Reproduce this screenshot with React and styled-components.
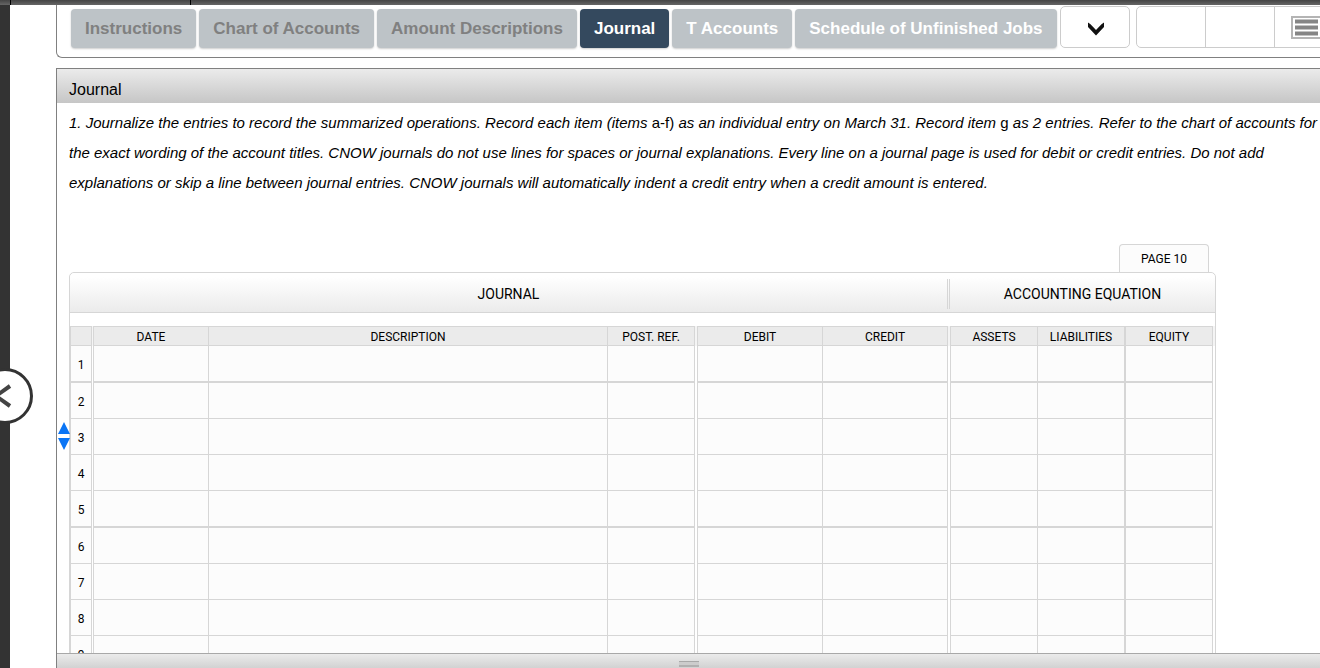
import React from 'react';
import styled, { createGlobalStyle } from 'styled-components';

const tabs = [
    { name: 'Instructions', dim: true },
    { name: 'Chart of Accounts', dim: true },
    { name: 'Amount Descriptions', dim: true },
    { name: 'Journal', active: true },
    { name: 'T Accounts' },
    { name: 'Schedule of Unfinished Jobs' },
];

// gap columns split the number, journal, amount and equation groups
const columns = [
    { key: 'line', width: 22, start: true },
    { key: 'gap1', width: 1, gap: true },
    { key: 'date', width: 116, start: true, label: 'DATE' },
    { key: 'description', label: 'DESCRIPTION' },
    { key: 'ref', width: 87, label: 'POST. REF.' },
    { key: 'gap2', width: 2, gap: true },
    { key: 'debit', width: 126, start: true, label: 'DEBIT' },
    { key: 'credit', width: 125, label: 'CREDIT' },
    { key: 'gap3', width: 2, gap: true },
    { key: 'assets', width: 88, start: true, label: 'ASSETS' },
    { key: 'liabilities', width: 88, thick: true, label: 'LIABILITIES' },
    { key: 'equity', width: 87, label: 'EQUITY' },
    { key: 'gap4', width: 2, gap: true },
];

const lines = [1, 2, 3, 4, 5, 6, 7, 8, 9];

export default class App extends React.Component {
    state = { page: 10 };

    renderTabs = () => {
        return tabs.map(tab => (
            <StyledTab key={tab.name} type="button" $active={tab.active} $dim={tab.dim}>
                {tab.name}
            </StyledTab>
        ))
    }

    renderToolbar = () => {
        return (
            <StyledToolbar>
                <StyledTabs>{this.renderTabs()}</StyledTabs>
                <StyledMore type="button" aria-label="More tabs">
                    <svg width="18" height="16" viewBox="0 0 18 16">
                        <path d="M1 1.5 L3.5 3.2 L9 9 L14.5 3.2 L17 1.5 V6 L9 14.5 L1 6 Z" fill="#111" />
                    </svg>
                </StyledMore>
                <StyledGroup>
                    <StyledGroupButton type="button" aria-label="Previous" />
                    <StyledGroupButton type="button" aria-label="Next" />
                    <StyledGroupButton type="button" aria-label="List">
                        <svg width="36" height="23" viewBox="0 0 36 23">
                            <rect x="1" y="1" width="30" height="21" fill="#fff" stroke="#b4b4b4" strokeWidth="2" />
                            <path d="M4 5.5 H27 M4 11.5 H27 M4 17.5 H27" stroke="#858585" strokeWidth="4" />
                        </svg>
                    </StyledGroupButton>
                </StyledGroup>
            </StyledToolbar>
        )
    }

    renderHead = () => {
        return columns.map(col => (
            col.gap
                ? <StyledGap key={col.key} $head />
                : <StyledTh key={col.key} scope="col" $start={col.start} $thick={col.thick}>{col.label}</StyledTh>
        ))
    }

    renderLines = () => {
        return lines.map(line => (
            <tr key={`line-${line}`}>
                {columns.map(col => (
                    col.gap
                        ? <StyledGap key={col.key} />
                        : <StyledTd key={col.key} $start={col.start} $thick={col.thick} $heavy={line % 4 === 1}>
                            {col.key === 'line' ? line : null}
                        </StyledTd>
                ))}
            </tr>
        ))
    }

    renderJournal = () => {
        return (
            <StyledBook>
                <StyledPageTab>PAGE {this.state.page}</StyledPageTab>
                <StyledSheet>
                    <StyledSheetHeader>
                        <StyledTitle>JOURNAL</StyledTitle>
                        <StyledTitle $narrow>ACCOUNTING EQUATION</StyledTitle>
                    </StyledSheetHeader>
                    <StyledTable>
                        <colgroup>
                            {columns.map(col => <col key={col.key} width={col.width} />)}
                        </colgroup>
                        <thead>
                            <tr>{this.renderHead()}</tr>
                        </thead>
                        <tbody>{this.renderLines()}</tbody>
                    </StyledTable>
                </StyledSheet>
                <StyledSorter>
                    <svg width="12" height="28" viewBox="0 0 12 28">
                        <path d="M6 0 L12 12 H0 Z M0 16 H12 L6 28 Z" fill="#0b75f5" />
                    </svg>
                </StyledSorter>
            </StyledBook>
        )
    }

    render() {
        return (
            <StyledPage>
                <GlobalStyle />
                <StyledStrip>
                    <StyledNotch $width={10} />
                    <StyledNotch $width={179} />
                </StyledStrip>
                <StyledRow>
                    <StyledSide>
                        <StyledBack type="button" aria-label="Back">
                            <svg width="24" height="24" viewBox="0 0 24 24">
                                <path d="M17 2 L3 12 L17 22" fill="none" stroke="#444" strokeWidth="4" />
                            </svg>
                        </StyledBack>
                    </StyledSide>
                    <StyledMain>
                        {this.renderToolbar()}
                        <StyledPanel>
                            <StyledPanelHeader>Journal</StyledPanelHeader>
                            <StyledBody>
                                <StyledText>
                                    1. Journalize the entries to record the summarized operations. Record each item (items <span>a-f)</span> as an
                                    individual entry on March 31. Record item <span>g</span> as 2 entries. Refer to the chart of accounts for
                                    the exact wording of the account titles. CNOW journals do not use lines for spaces or journal explanations.
                                    Every line on a journal page is used for debit or credit entries. Do not add explanations or skip a line
                                    between journal entries. CNOW journals will automatically indent a credit entry when a credit amount is entered.
                                </StyledText>
                                {this.renderJournal()}
                            </StyledBody>
                            <StyledFooter>
                                <StyledHandle />
                            </StyledFooter>
                        </StyledPanel>
                    </StyledMain>
                </StyledRow>
            </StyledPage>
        )
    }
}

const GlobalStyle = createGlobalStyle`
* {
  box-sizing: border-box;
}
body {
  margin: 0;
  background: #fff;
  color: #000;
  font-family: "Liberation Sans", Arial, sans-serif;
}
button {
  font-family: inherit;
  cursor: pointer;
}
`
const StyledPage = styled.div`
display: flex;
flex-direction: column;
height: 100vh;
overflow: hidden;
`
const StyledStrip = styled.div`
display: flex;
flex: none;
gap: 1px;
height: 5px;
background: linear-gradient(#444, #666);
`
const StyledNotch = styled.div`
width: ${props => props.$width}px;
box-shadow: 1px 0 0 #000;
`
const StyledRow = styled.div`
display: flex;
flex: 1;
min-height: 0;
`
const StyledSide = styled.div`
position: relative;
flex: none;
width: 10px;
background: #333;
`
const StyledBack = styled.button`
position: absolute;
top: 363px;
left: -23px;
display: flex;
align-items: center;
justify-content: center;
width: 56px;
height: 56px;
padding: 0;
border: 3px solid #333;
border-radius: 50%;
background: #fff;
`
const StyledMain = styled.div`
display: flex;
flex: 1;
flex-direction: column;
gap: 10px;
min-width: 0;
padding-left: 46px;
`
const StyledToolbar = styled.div`
display: flex;
flex: none;
align-items: flex-start;
height: 53px;
padding: 1px 0 0 14px;
border-bottom: 1px solid #808080;
border-left: 1px solid #808080;
border-bottom-left-radius: 6px;
overflow: hidden;
`
const StyledTabs = styled.div`
display: flex;
flex: none;
gap: 3px;
padding-top: 3px;
`
const StyledTab = styled.button`
height: 39px;
padding: 0 14px;
border: 0;
border-radius: 4px;
background: ${props => props.$active ? '#34495e' : '#bdc3c7'};
color: ${props => props.$dim ? '#808080' : '#fff'};
box-shadow: 0 1px 2px rgba(0, 0, 0, 0.2);
font-size: 17px;
font-weight: bold;
white-space: nowrap;
`
const StyledMore = styled.button`
display: flex;
flex: none;
align-items: center;
justify-content: center;
width: 70px;
height: 42px;
margin-left: 3px;
padding: 4px 0 0 2px;
border: 1px solid #ccc;
border-radius: 5px;
background: #fff;
`
const StyledGroup = styled.div`
display: flex;
flex: none;
height: 42px;
margin-left: 6px;
border: 1px solid #ccc;
border-radius: 5px;
`
const StyledGroupButton = styled.button`
display: flex;
align-items: center;
width: 69px;
padding: 0 0 0 16px;
border: 0;
border-right: 1px solid #ccc;
background: transparent;
`
const StyledPanel = styled.section`
display: flex;
flex: 1;
flex-direction: column;
min-height: 0;
border-top: 1px solid #808080;
border-left: 1px solid #808080;
`
const StyledPanelHeader = styled.header`
flex: none;
height: 34px;
padding: 4px 12px 0;
background: linear-gradient(#ebebeb, #c6c6c6);
font-size: 16px;
line-height: 34px;
`
const StyledBody = styled.div`
flex: 1;
min-height: 0;
padding: 5px 0 0 12px;
overflow: hidden;
`
const StyledText = styled.p`
margin: 0;
font-size: 15px;
font-style: italic;
line-height: 30px;

span {
  font-style: normal;
}
`
const StyledBook = styled.div`
position: relative;
display: flex;
flex-direction: column;
max-width: 1147px;
margin-top: 46px;
font-family: Roboto, "Noto Sans", sans-serif;
`
const StyledPageTab = styled.div`
align-self: flex-end;
width: 90px;
height: 28px;
margin-right: 7px;
border: 1px solid #d6d6d6;
border-bottom: 0;
border-radius: 4px 4px 0 0;
background: #fcfcfc;
font-size: 12px;
line-height: 28px;
text-align: center;
`
const StyledSheet = styled.div`
border: 1px solid #d6d6d6;
border-radius: 5px 5px 0 0;
`
const StyledSheetHeader = styled.div`
display: flex;
gap: 1px;
height: 40px;
margin-bottom: 13px;
padding: 6px 0 3px;
border-bottom: 1px solid #d6d6d6;
border-radius: 5px 5px 0 0;
background: linear-gradient(#fff 10%, #ebebeb);
`
const StyledTitle = styled.h2`
flex: ${props => props.$narrow ? '0 0 266px' : '1'};
margin: 0;
font-size: 14px;
font-weight: normal;
line-height: 30px;
text-align: center;

& + & {
  border-left: 1px solid #d6d6d6;
}
&:first-child {
  border-right: 1px solid #d6d6d6;
}
`
const StyledTable = styled.table`
width: 100%;
border-spacing: 0;
table-layout: fixed;
font-size: 12px;
text-align: center;
`
const StyledTh = styled.th`
height: 20px;
padding: 2px 0 0;
border: 0 solid #d6d6d6;
border-width: 1px ${props => props.$thick ? 2 : 1}px 1px ${props => props.$start ? 1 : 0}px;
background: #ebebeb;
font-weight: normal;
line-height: 16px;
`
const StyledTd = styled.td`
height: ${props => props.$heavy ? 37 : 36}px;
padding: 2px 0 0;
border: 0 solid #d6d6d6;
border-width: 0 ${props => props.$thick ? 2 : 1}px ${props => props.$heavy ? 2 : 1}px ${props => props.$start ? 1 : 0}px;
background: #fcfcfc;
`
const StyledGap = styled.td`
padding: 0;
background: ${props => props.$head ? '#f4f4f4' : '#fff'};
`
const StyledSorter = styled.div`
position: absolute;
top: 178px;
left: -11px;
line-height: 0;
`
const StyledFooter = styled.footer`
display: flex;
flex: none;
justify-content: center;
height: 15px;
padding-top: 7px;
border-top: 1px solid #a8a8a8;
background: linear-gradient(#ebebeb, #d2d2d2);
`
const StyledHandle = styled.div`
width: 20px;
height: 6px;
border-top: 1px solid #a8a8a8;
border-bottom: 2px solid #b0b0b0;
background: #ccc;
`
